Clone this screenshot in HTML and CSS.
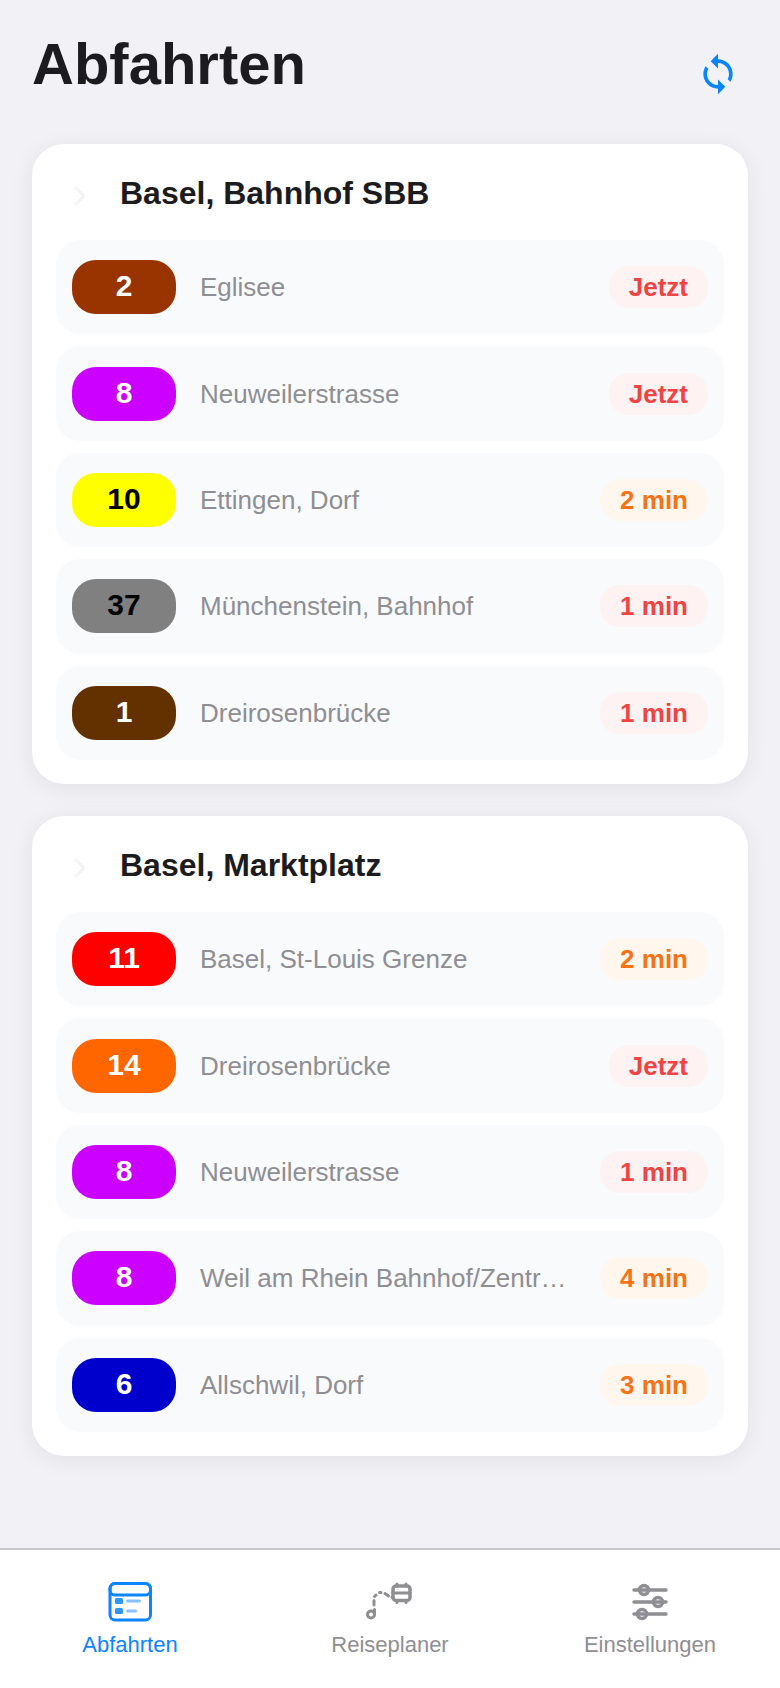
FILE: index.html
```html
<!DOCTYPE html>
<html lang="de">
<head>
  <meta charset="UTF-8">
  <meta name="viewport" content="width=device-width, initial-scale=1.0">
  <title>Abfahrten</title>
  <link rel="stylesheet" href="styles.css">
</head>
<body>
  <header class="header">
    <h1>Abfahrten</h1>
    <button type="button" class="refresh" aria-label="Aktualisieren">
      <svg viewBox="0 0 24 24" fill="currentColor">
        <path d="M12 4V1L8 5l4 4V6c3.31 0 6 2.69 6 6 0 1.01-.25 1.97-.7 2.8l1.46 1.46C19.54 15.03 20 13.57 20 12c0-4.42-3.58-8-8-8zm0 14c-3.31 0-6-2.69-6-6 0-1.01.25-1.97.7-2.8L5.24 7.74C4.46 8.97 4 10.43 4 12c0 4.42 3.58 8 8 8v3l4-4-4-4v3z"/>
      </svg>
    </button>
  </header>

  <main class="stations">
    <section class="station">
      <button type="button" class="station-header">
        <svg class="chevron" viewBox="0 0 24 24"><path d="M9 6l6 6-6 6"/></svg>
        <span class="station-name">Basel, Bahnhof SBB</span>
      </button>
      <ul class="departures">
        <li class="departure">
          <span class="line line-2">2</span>
          <span class="destination">Eglisee</span>
          <span class="time now">Jetzt</span>
        </li>
        <li class="departure">
          <span class="line line-8">8</span>
          <span class="destination">Neuweilerstrasse</span>
          <span class="time now">Jetzt</span>
        </li>
        <li class="departure">
          <span class="line line-10">10</span>
          <span class="destination">Ettingen, Dorf</span>
          <span class="time soon">2 min</span>
        </li>
        <li class="departure">
          <span class="line line-37">37</span>
          <span class="destination">Münchenstein, Bahnhof</span>
          <span class="time now">1 min</span>
        </li>
        <li class="departure">
          <span class="line line-1">1</span>
          <span class="destination">Dreirosenbrücke</span>
          <span class="time now">1 min</span>
        </li>
      </ul>
    </section>

    <section class="station">
      <button type="button" class="station-header">
        <svg class="chevron" viewBox="0 0 24 24"><path d="M9 6l6 6-6 6"/></svg>
        <span class="station-name">Basel, Marktplatz</span>
      </button>
      <ul class="departures">
        <li class="departure">
          <span class="line line-11">11</span>
          <span class="destination">Basel, St-Louis Grenze</span>
          <span class="time soon">2 min</span>
        </li>
        <li class="departure">
          <span class="line line-14">14</span>
          <span class="destination">Dreirosenbrücke</span>
          <span class="time now">Jetzt</span>
        </li>
        <li class="departure">
          <span class="line line-8">8</span>
          <span class="destination">Neuweilerstrasse</span>
          <span class="time now">1 min</span>
        </li>
        <li class="departure">
          <span class="line line-8">8</span>
          <span class="destination">Weil am Rhein Bahnhof/Zentrum</span>
          <span class="time soon">4 min</span>
        </li>
        <li class="departure">
          <span class="line line-6">6</span>
          <span class="destination">Allschwil, Dorf</span>
          <span class="time soon">3 min</span>
        </li>
      </ul>
    </section>
  </main>

  <nav class="tabbar">
    <a href="#abfahrten" class="tab active">
      <svg viewBox="0 0 48 48" stroke-width="3">
        <rect x="4" y="5.5" width="40.5" height="36.5" rx="5"/>
        <rect x="4" y="5.5" width="40.5" height="11.5" rx="5"/>
        <g class="solid">
          <rect x="9" y="20" width="8" height="6" rx="1.5"/>
          <rect x="9" y="30" width="8" height="6" rx="1.5"/>
        </g>
        <path class="faint" d="M21.5 23h12M21.5 33h8"/>
      </svg>
      <span>Abfahrten</span>
    </a>
    <a href="#reiseplaner" class="tab">
      <svg viewBox="0 0 48 48" stroke-width="3">
        <circle cx="5" cy="36.5" r="3.5"/>
        <path d="M8.5 36v-4.5M8 27v-4.5M8.500 18.500l1.500-1.500M13.500 14.500h1.500M19 15.500l3.500 2.500M26 19h1"/>
        <rect x="27" y="8" width="17" height="14.5" rx="3" stroke-width="3.5"/>
        <path d="M27 15h17M31 6v2M40 6v2M31 23v1.500M40 23v1.500"/>
      </svg>
      <span>Reiseplaner</span>
    </a>
    <a href="#einstellungen" class="tab">
      <svg viewBox="0 0 48 48" stroke-width="3.5">
        <path d="M8 12h32M8 24h32M8 36h32"/>
        <circle cx="18" cy="12" r="4.5"/>
        <circle cx="32" cy="24" r="4.5"/>
        <circle cx="16" cy="36" r="4.5"/>
      </svg>
      <span>Einstellungen</span>
    </a>
  </nav>
</body>
</html>
```
FILE: styles.css
```css
* {
  padding: 0;
  margin: 0;
  box-sizing: border-box;
}

body {
  font-family: "Liberation Sans", Arial, sans-serif;
  background-color: #f2f1f6;
  color: #1c1c1e;
  min-height: 100vh;
  display: flex;
  flex-direction: column;
}

button {
  font: inherit;
  color: inherit;
  background: none;
  border: none;
  cursor: pointer;
}

.header {
  display: flex;
  justify-content: space-between;
  align-items: center;
  padding: 24px 32px 40px;
}

.header h1 {
  font-size: 58px;
  line-height: 80px;
}

.refresh {
  width: 60px;
  height: 60px;
  padding: 8px;
  align-self: flex-end;
}

.refresh svg {
  display: block;
  width: 44px;
  height: 44px;
  color: #0a84ff;
}

.stations {
  flex: 1;
  display: flex;
  flex-direction: column;
  gap: 32px;
  padding: 0 32px 32px;
}

.station {
  background-color: #fff;
  border-radius: 32px;
  padding: 20px 24px 24px;
  box-shadow: 0 4px 24px rgba(0, 0, 0, 0.07);
}

.station-header {
  display: flex;
  align-items: center;
  gap: 24px;
  width: 100%;
  height: 58px;
  padding-left: 8px;
  margin-bottom: 18px;
  text-align: left;
}

.chevron {
  width: 32px;
  height: 32px;
  margin-top: 6px;
  fill: none;
  stroke: #f2f2f7;
  stroke-width: 2;
  stroke-linecap: round;
  stroke-linejoin: round;
}

.station-name {
  font-size: 32px;
  font-weight: bold;
}

.departures {
  display: grid;
  gap: 12px;
  min-height: 520px;
  list-style-type: none;
}

.departure {
  display: flex;
  align-items: center;
  gap: 24px;
  padding: 16px;
  background-color: #f9fafc;
  border-radius: 24px;
}

.line {
  flex: none;
  width: 104px;
  height: 54px;
  line-height: 52px;
  border-radius: 24px;
  font-size: 30px;
  font-weight: bold;
  text-align: center;
  color: #fff;
}

.destination {
  flex: 1;
  min-width: 0;
  font-size: 26px;
  line-height: 36px;
  color: #8e8e93;
  white-space: nowrap;
  overflow: hidden;
  text-overflow: ellipsis;
}

.time {
  padding: 0 20px;
  border-radius: 20px;
  font-size: 26px;
  line-height: 42px;
  font-weight: bold;
}

.now {
  color: #ef4444;
  background-color: #fef2f2;
}

.soon {
  color: #f97316;
  background-color: #fff7ed;
}

/* Official line colors */
.line-1 { background-color: #633000; }
.line-2 { background-color: #993300; }
.line-6 { background-color: #0000cc; }
.line-8 { background-color: #cc00ff; }
.line-10 { background-color: #ffff00; color: #000; }
.line-11 { background-color: #ff0000; }
.line-14 { background-color: #ff6600; }
.line-37 { background-color: #808080; color: #000; }

.tabbar {
  position: sticky;
  bottom: 0;
  display: flex;
  height: 140px;
  padding-top: 28px;
  background-color: #fff;
  border-top: 2px solid #c6c6c8;
}

.tab {
  flex: 1;
  display: flex;
  flex-direction: column;
  align-items: center;
  gap: 4px;
  font-size: 22px;
  line-height: 30px;
  color: #8e8e93;
  text-decoration: none;
}

.tab.active {
  color: #0a84ff;
}

.tab svg {
  width: 48px;
  height: 48px;
  fill: none;
  stroke: currentColor;
  stroke-linecap: round;
  stroke-linejoin: round;
}

.tab .solid {
  fill: currentColor;
  stroke: none;
  opacity: 0.85;
}

.tab .faint {
  opacity: 0.5;
}
```
